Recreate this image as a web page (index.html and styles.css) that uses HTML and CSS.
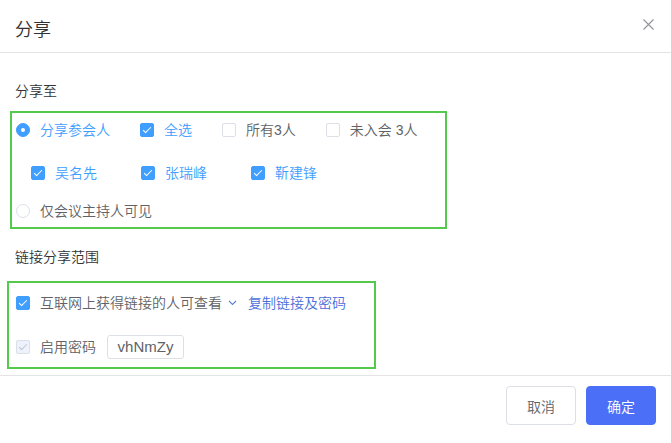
FILE: index.html
```html
<!DOCTYPE html>
<html lang="zh-CN">
<head>
    <meta charset="UTF-8">
    <title>分享</title>
    <link rel="stylesheet" href="styles.css">
</head>
<body>
    <div class="dialog">
        <div class="dialog-header">
            <span class="dialog-title">分享</span>
            <span class="dialog-close">
                <svg width="11" height="11" viewBox="0 0 11 11"><path d="M0.5 0.5L10.5 10.5M10.5 0.5L0.5 10.5" stroke="#909399" stroke-width="1.1" fill="none"/></svg>
            </span>
        </div>

        <div class="dialog-body">
            <div class="section-label">分享至</div>
            <div class="option-box share-box">
                <div class="opt-row">
                    <label class="radio is-checked"><span class="radio-input"></span><span class="opt-text">分享参会人</span></label>
                    <label class="checkbox is-checked"><span class="checkbox-input"></span><span class="opt-text">全选</span></label>
                    <label class="checkbox"><span class="checkbox-input"></span><span class="opt-text">所有3人</span></label>
                    <label class="checkbox"><span class="checkbox-input"></span><span class="opt-text">未入会 3人</span></label>
                </div>
                <div class="opt-row member-row">
                    <label class="checkbox is-checked"><span class="checkbox-input"></span><span class="opt-text">吴名先</span></label>
                    <label class="checkbox is-checked"><span class="checkbox-input"></span><span class="opt-text">张瑞峰</span></label>
                    <label class="checkbox is-checked"><span class="checkbox-input"></span><span class="opt-text">靳建锋</span></label>
                </div>
                <div class="opt-row host-row">
                    <label class="radio"><span class="radio-input"></span><span class="opt-text">仅会议主持人可见</span></label>
                </div>
            </div>

            <div class="section-label link-label">链接分享范围</div>
            <div class="option-box link-box">
                <div class="opt-row">
                    <label class="checkbox is-checked plain"><span class="checkbox-input"></span><span class="opt-text">互联网上获得链接的人可查看</span></label>
                    <span class="scope-arrow">
                        <svg width="9" height="6" viewBox="0 0 9 6"><path d="M1 1L4.5 4.5L8 1" stroke="#5f80d9" stroke-width="1.1" fill="none"/></svg>
                    </span>
                    <a class="copy-link">复制链接及密码</a>
                </div>
                <div class="opt-row password-row">
                    <label class="checkbox is-checked is-disabled"><span class="checkbox-input"></span><span class="opt-text">启用密码</span></label>
                    <span class="password-box">vhNmZy</span>
                </div>
            </div>
        </div>

        <div class="dialog-footer">
            <button class="btn">取消</button>
            <button class="btn btn-primary">确定</button>
        </div>
    </div>
</body>
</html>
```

FILE: styles.css
```css
/* Share dialog */
body {
    margin: 0;
    background: #fff;
    font-family: "Liberation Sans", "Noto Sans CJK SC", sans-serif;
    font-weight: 350;
    color: #606266;
}
.dialog {
    width: 671px;
    height: 443px;
    background: #fff;
}
.dialog-header {
    display: flex;
    justify-content: space-between;
    padding: 18px 17px 10px 15px;
    border-bottom: 1px solid #e4e4e4;
}
.dialog-title {
    font-size: 18px;
    line-height: 24px;
    color: #303133;
}
.dialog-close {
    margin-top: 1px;
    width: 11px;
    height: 11px;
    line-height: 0;
}
.dialog-body {
    padding-top: 28px;
}
.section-label {
    padding-left: 15px;
    font-size: 14px;
    line-height: 20px;
    color: #333;
    margin-bottom: 10px;
}
.link-label {
    margin-top: 18px;
    margin-bottom: 14px;
}
.option-box {
    box-sizing: border-box;
    border: 2px solid #55c94c;
}
.share-box {
    margin-left: 10px;
    width: 437px;
    padding: 7px 0 6px 4px;
}
.link-box {
    margin-left: 7px;
    width: 369px;
    padding: 10px 0 8px 7px;
}
.opt-row {
    display: flex;
    align-items: center;
    height: 20px;
}
.member-row {
    margin-top: 23px;
    padding-left: 15px;
}
.member-row .checkbox {
    width: 110px;
    margin-right: 0;
}
.host-row {
    margin-top: 18px;
}
.password-row {
    margin-top: 22px;
    height: 24px;
}
.radio, .checkbox {
    display: flex;
    align-items: center;
    margin-right: 30px;
    font-size: 14px;
    line-height: 20px;
    cursor: pointer;
}
.opt-text {
    margin-left: 10px;
    white-space: nowrap;
}
.is-checked .opt-text {
    color: #409eff;
}
.plain .opt-text, .is-disabled .opt-text {
    color: #606266;
}
.radio-input {
    box-sizing: border-box;
    width: 14px;
    height: 14px;
    border: 1px solid #dcdfe6;
    border-radius: 50%;
    background: #fff;
    position: relative;
}
.radio.is-checked .radio-input {
    background: #409eff;
    border-color: #409eff;
}
.radio.is-checked .radio-input::after {
    content: "";
    position: absolute;
    left: 4px;
    top: 4px;
    width: 4px;
    height: 4px;
    border-radius: 50%;
    background: #fff;
}
.checkbox-input {
    box-sizing: border-box;
    width: 14px;
    height: 14px;
    border: 1px solid #dcdfe6;
    border-radius: 2px;
    background: #fff;
    position: relative;
}
.checkbox.is-checked .checkbox-input {
    background: #409eff;
    border-color: #409eff;
}
.checkbox.is-checked .checkbox-input::after {
    content: "";
    position: absolute;
    left: 4px;
    top: 1px;
    width: 3px;
    height: 7px;
    border: 1px solid #fff;
    border-top: 0;
    border-left: 0;
    transform: rotate(45deg);
}
.checkbox.is-disabled .checkbox-input {
    background: #edf2fc;
    border-color: #dcdfe6;
}
.checkbox.is-disabled .checkbox-input::after {
    border-color: #c0c4cc;
}
.link-box .checkbox {
    margin-right: 0;
}
.scope-arrow {
    margin-left: 6px;
    line-height: 0;
}
.copy-link {
    margin-left: 11px;
    font-size: 14px;
    line-height: 20px;
    color: #4a6fd9;
    cursor: pointer;
}
.password-box {
    box-sizing: border-box;
    margin-left: 11px;
    width: 77px;
    height: 24px;
    border: 1px solid #dcdfe6;
    border-radius: 3px;
    font-size: 15px;
    font-weight: 400;
    line-height: 22px;
    text-align: center;
    color: #606266;
}
.dialog-footer {
    display: flex;
    justify-content: flex-end;
    gap: 10px;
    margin-top: 6px;
    padding: 10px 15px 0;
    border-top: 1px solid #e4e4e4;
}
.btn {
    width: 70px;
    height: 39px;
    border: 1px solid #dcdfe6;
    border-radius: 4px;
    background: #fff;
    color: #606266;
    font-family: inherit;
    font-weight: inherit;
    font-size: 14px;
    cursor: pointer;
}
.btn-primary {
    background: #4b6ff6;
    border-color: #4b6ff6;
    color: #fff;
}
```
